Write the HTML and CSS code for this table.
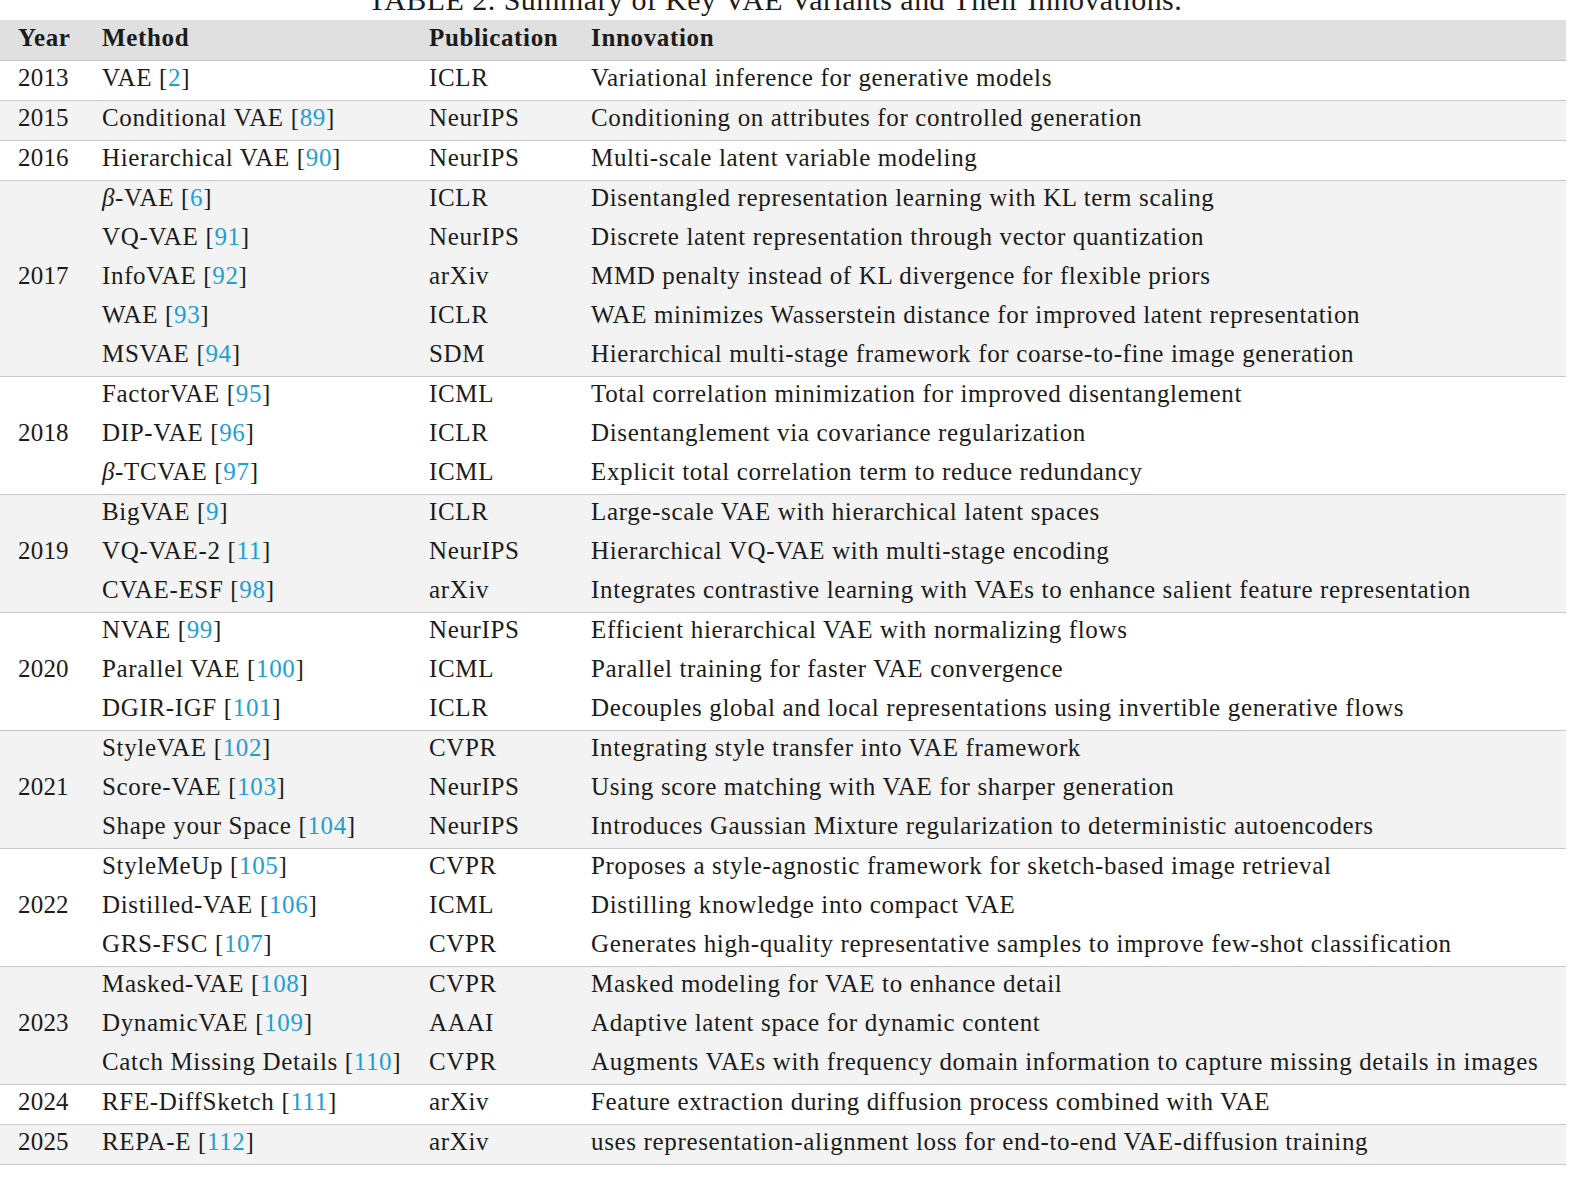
FILE: index.html
```html
<!DOCTYPE html>
<html lang="en">
<head>
<meta charset="utf-8">
<title>TABLE 2. Summary of Key VAE Variants and Their Innovations.</title>
<link rel="stylesheet" href="styles.css">
</head>
<body>
<div class="caption">TABLE 2. Summary of Key VAE Variants and Their Innovations.</div>
<table class="vae">
  <thead>
    <tr class="head">
      <th class="c-year">Year</th><th class="c-method">Method</th><th class="c-pub">Publication</th><th class="c-inn">Innovation</th>
    </tr>
  </thead>
  <tbody class="grp">
    <tr><td class="year">2013</td><td>VAE [<a>2</a>]</td><td>ICLR</td><td>Variational inference for generative models</td></tr>
  </tbody>
  <tbody class="grp alt">
    <tr><td class="year">2015</td><td>Conditional VAE [<a>89</a>]</td><td>NeurIPS</td><td>Conditioning on attributes for controlled generation</td></tr>
  </tbody>
  <tbody class="grp">
    <tr><td class="year">2016</td><td>Hierarchical VAE [<a>90</a>]</td><td>NeurIPS</td><td>Multi-scale latent variable modeling</td></tr>
  </tbody>
  <tbody class="grp alt">
    <tr><td class="year span" rowspan="5">2017</td><td><i class="greek">β</i>-VAE [<a>6</a>]</td><td>ICLR</td><td>Disentangled representation learning with KL term scaling</td></tr>
    <tr><td>VQ-VAE [<a>91</a>]</td><td>NeurIPS</td><td>Discrete latent representation through vector quantization</td></tr>
    <tr><td>InfoVAE [<a>92</a>]</td><td>arXiv</td><td>MMD penalty instead of KL divergence for flexible priors</td></tr>
    <tr><td>WAE [<a>93</a>]</td><td>ICLR</td><td>WAE minimizes Wasserstein distance for improved latent representation</td></tr>
    <tr><td>MSVAE [<a>94</a>]</td><td>SDM</td><td>Hierarchical multi-stage framework for coarse-to-fine image generation</td></tr>
  </tbody>
  <tbody class="grp">
    <tr><td class="year span" rowspan="3">2018</td><td>FactorVAE [<a>95</a>]</td><td>ICML</td><td>Total correlation minimization for improved disentanglement</td></tr>
    <tr><td>DIP-VAE [<a>96</a>]</td><td>ICLR</td><td>Disentanglement via covariance regularization</td></tr>
    <tr><td><i class="greek">β</i>-TCVAE [<a>97</a>]</td><td>ICML</td><td>Explicit total correlation term to reduce redundancy</td></tr>
  </tbody>
  <tbody class="grp alt">
    <tr><td class="year span" rowspan="3">2019</td><td>BigVAE [<a>9</a>]</td><td>ICLR</td><td>Large-scale VAE with hierarchical latent spaces</td></tr>
    <tr><td>VQ-VAE-2 [<a>11</a>]</td><td>NeurIPS</td><td>Hierarchical VQ-VAE with multi-stage encoding</td></tr>
    <tr><td>CVAE-ESF [<a>98</a>]</td><td>arXiv</td><td>Integrates contrastive learning with VAEs to enhance salient feature representation</td></tr>
  </tbody>
  <tbody class="grp">
    <tr><td class="year span" rowspan="3">2020</td><td>NVAE [<a>99</a>]</td><td>NeurIPS</td><td>Efficient hierarchical VAE with normalizing flows</td></tr>
    <tr><td>Parallel VAE [<a>100</a>]</td><td>ICML</td><td>Parallel training for faster VAE convergence</td></tr>
    <tr><td>DGIR-IGF [<a>101</a>]</td><td>ICLR</td><td>Decouples global and local representations using invertible generative flows</td></tr>
  </tbody>
  <tbody class="grp alt">
    <tr><td class="year span" rowspan="3">2021</td><td>StyleVAE [<a>102</a>]</td><td>CVPR</td><td>Integrating style transfer into VAE framework</td></tr>
    <tr><td>Score-VAE [<a>103</a>]</td><td>NeurIPS</td><td>Using score matching with VAE for sharper generation</td></tr>
    <tr><td>Shape your Space [<a>104</a>]</td><td>NeurIPS</td><td>Introduces Gaussian Mixture regularization to deterministic autoencoders</td></tr>
  </tbody>
  <tbody class="grp">
    <tr><td class="year span" rowspan="3">2022</td><td>StyleMeUp [<a>105</a>]</td><td>CVPR</td><td>Proposes a style-agnostic framework for sketch-based image retrieval</td></tr>
    <tr><td>Distilled-VAE [<a>106</a>]</td><td>ICML</td><td>Distilling knowledge into compact VAE</td></tr>
    <tr><td>GRS-FSC [<a>107</a>]</td><td>CVPR</td><td>Generates high-quality representative samples to improve few-shot classification</td></tr>
  </tbody>
  <tbody class="grp alt">
    <tr><td class="year span" rowspan="3">2023</td><td>Masked-VAE [<a>108</a>]</td><td>CVPR</td><td>Masked modeling for VAE to enhance detail</td></tr>
    <tr><td>DynamicVAE [<a>109</a>]</td><td>AAAI</td><td>Adaptive latent space for dynamic content</td></tr>
    <tr><td>Catch Missing Details [<a>110</a>]</td><td>CVPR</td><td>Augments VAEs with frequency domain information to capture missing details in images</td></tr>
  </tbody>
  <tbody class="grp">
    <tr><td class="year">2024</td><td>RFE-DiffSketch [<a>111</a>]</td><td>arXiv</td><td>Feature extraction during diffusion process combined with VAE</td></tr>
  </tbody>
  <tbody class="grp alt">
    <tr><td class="year">2025</td><td>REPA-E [<a>112</a>]</td><td>arXiv</td><td>uses representation-alignment loss for end-to-end VAE-diffusion training</td></tr>
  </tbody>
</table>
</body>
</html>
```

FILE: styles.css
```css
html, body {
  margin: 0;
  padding: 0;
  background: #ffffff;
}

body {
  width: 1570px;
  height: 1194px;
  overflow: hidden;
  font-family: "Liberation Serif", "Times New Roman", serif;
  color: #1b1b1b;
}

.caption {
  width: 1550px;
  margin-top: -16px;
  height: 36px;
  font-size: 30px;
  line-height: 32px;
  letter-spacing: 0.45px;
  text-align: center;
}

.vae {
  width: 1566px;
  border-collapse: collapse;
  table-layout: fixed;
  font-size: 25px;
  letter-spacing: 0.65px;
}

.vae th,
.vae td {
  padding: 0 0 0 18px;
  height: 39px;
  line-height: 34px;
  text-align: left;
  white-space: nowrap;
  vertical-align: top;
}

.vae td.year {
  letter-spacing: 0.2px;
}

.vae td.span {
  vertical-align: middle;
  padding-bottom: 5px;
}

.c-year { width: 66px; }
.c-method { width: 309px; }
.c-pub { width: 144px; }

.head {
  background: #e0e0e0;
  border-bottom: 1px solid #c4c4c4;
}

.vae .head th {
  font-weight: bold;
  height: 40px;
  line-height: 35px;
}

.grp {
  background: #ffffff;
  border-bottom: 1px solid #c8c8c8;
}

.grp.alt {
  background: #f3f3f3;
}

.vae a {
  color: #1d9fd6;
  text-decoration: none;
}

.greek {
  font-style: italic;
}
```
